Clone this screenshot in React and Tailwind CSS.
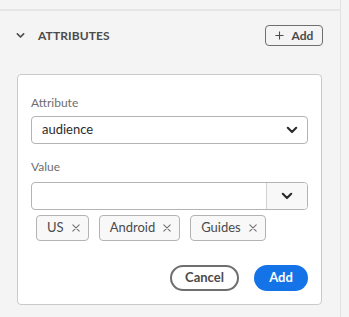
import React from "react";

const Chevron = ({ className = "" }) => (
  <svg viewBox="0 0 10 10" className={className} fill="none">
    <path d="M1.5 3.2 L5 6.7 L8.5 3.2" stroke="currentColor" strokeWidth="1.8" strokeLinecap="round" strokeLinejoin="round" />
  </svg>
);

const Cross = () => (
  <svg viewBox="0 0 10 10" className="w-[8px] h-[8px] text-[#6e6e6e]" fill="none">
    <path d="M1 1 L9 9 M9 1 L1 9" stroke="currentColor" strokeWidth="1.3" strokeLinecap="round" />
  </svg>
);

const Tag = ({ label }) => (
  <div className="h-[26px] flex items-center gap-[8px] pl-[10px] pr-[8px] rounded-[4px] border border-[#b3b3b3] bg-[#f8f8f8] text-[13px] text-[#4b4b4b]">
    <span>{label}</span>
    <Cross />
  </div>
);

export default function App() {
  return (
    <div
      className="w-[349px] h-[317px] flex bg-[#f4f4f4] overflow-hidden"
      style={{ fontFamily: "Lato, 'Open Sans', sans-serif" }}
    >
      <div className="w-[340px] flex flex-col">
        <div className="h-[11px] border-b-2 border-[#e6e6e6]" />

        <div className="flex items-center justify-between pl-[16px] pr-[17px] pt-[14px]">
          <div className="flex items-center gap-[13px]">
            <Chevron className="w-[9px] h-[9px] text-[#4b4b4b]" />
            <span className="text-[12px] font-bold tracking-[0.1px] text-[#4b4b4b]">ATTRIBUTES</span>
          </div>
          <button className="h-[21px] w-[58px] flex items-center justify-center gap-[8px] rounded-[4px] border border-[#6e6e6e] text-[12px] font-bold text-[#4b4b4b]">
            <svg viewBox="0 0 10 10" className="w-[9px] h-[9px]" fill="none">
              <path d="M5 0.5 V9.5 M0.5 5 H9.5" stroke="currentColor" strokeWidth="1.2" />
            </svg>
            <span>Add</span>
          </button>
        </div>

        <div className="ml-[17px] mt-[28px] w-[305px] h-[231px] bg-white border border-[#cacaca] rounded-[4px] px-[13px] pt-[20px] flex flex-col">
          <label className="text-[12px] text-[#6e6e6e] leading-[16px]">Attribute</label>
          <div className="mt-[5px] h-[28px] flex items-center justify-between rounded-[4px] border border-[#b3b3b3] pl-[10px] pr-[9px]">
            <span className="text-[13px] text-[#2c2c2c]">audience</span>
            <Chevron className="w-[12px] h-[12px] text-[#2c2c2c]" />
          </div>

          <label className="mt-[15px] text-[12px] text-[#6e6e6e] leading-[16px]">Value</label>
          <div className="mt-[7px] h-[28px] flex rounded-[4px] border border-[#b3b3b3] overflow-hidden">
            <div className="flex-1" />
            <div className="w-[41px] flex items-center justify-center border-l border-[#d0d0d0] bg-[#f8f8f8]">
              <Chevron className="w-[12px] h-[12px] text-[#2c2c2c]" />
            </div>
          </div>

          <div className="mt-[5px] ml-[5px] flex gap-[10px]">
            <Tag label="US" />
            <Tag label="Android" />
            <Tag label="Guides" />
          </div>

          <div className="mt-[24px] flex justify-end gap-[15px]">
            <button className="h-[26px] w-[69px] rounded-full border-2 border-[#6e6e6e] text-[13px] font-bold text-[#4b4b4b]">
              Cancel
            </button>
            <button className="h-[26px] w-[54px] rounded-full bg-[#1473e6] text-[13px] font-bold text-white">
              Add
            </button>
          </div>
        </div>
      </div>
      <div className="w-px bg-[#e1e1e1]" />
      <div className="flex-1 bg-[#f4f4f4]" />
    </div>
  );
}
